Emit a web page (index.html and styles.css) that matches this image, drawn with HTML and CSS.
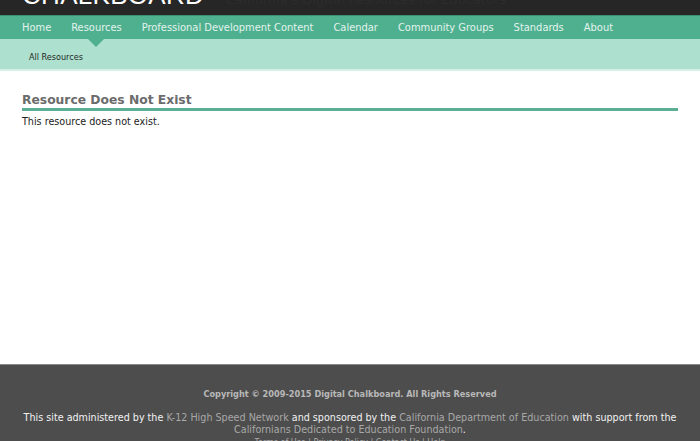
FILE: index.html
```html
<!DOCTYPE html>
<html>
<head>
<meta charset="utf-8">
<link rel="stylesheet" href="styles.css">
</head>
<body>
<header class="top">
  <div class="brand">
    <span class="logo">CHALKBOARD</span>
    <span class="tagline">California's Digital Resources for Educators</span>
  </div>
</header>
<nav class="mainnav">
  <a class="item">Home</a>
  <a class="item active">Resources</a>
  <a class="item">Professional Development Content</a>
  <a class="item">Calendar</a>
  <a class="item">Community Groups</a>
  <a class="item">Standards</a>
  <a class="item">About</a>
</nav>
<div class="subnav">
  <a class="subitem">All Resources</a>
</div>
<main class="content">
  <h1 class="title">Resource Does Not Exist</h1>
  <p class="msg">This resource does not exist.</p>
</main>
<footer class="footer">
  <p class="copy">Copyright © 2009-2015 Digital Chalkboard. All Rights Reserved</p>
  <p class="admin">This site administered by the <a class="flink">K-12 High Speed Network</a> and sponsored by the <a class="flink">California Department of Education</a> with support from the <a class="flink">Californians Dedicated to Education Foundation</a>.</p>
  <p class="small">Terms of Use | Privacy Policy | Contact Us | Help</p>
</footer>
</body>
</html>
```
FILE: styles.css
```css
html, body {
  margin: 0;
  padding: 0;
  background: #fff;
  font-family: "DejaVu Sans", sans-serif;
}
body {
  height: 441px;
  overflow: hidden;
  display: flex;
  flex-direction: column;
}
.top {
  background: #262626;
  height: 15px;
  overflow: hidden;
  flex: none;
}
.brand {
  display: flex;
  align-items: baseline;
  padding-left: 22px;
  margin-top: -17px;
  line-height: 24px;
}
.logo {
  font-family: "Liberation Sans", sans-serif;
  font-size: 26px;
  color: #fff;
  letter-spacing: 0.3px;
}
.tagline {
  margin-left: 22px;
  font-size: 13px;
  color: #2c2c2c;
}
.mainnav {
  flex: none;
  background: #4fb08f;
  height: 24px;
  display: flex;
  align-items: center;
  padding-left: 12px;
  border-top: 1px solid #3f8f74;
  box-sizing: border-box;
}
.item {
  position: relative;
  color: #e3f3ed;
  font-size: 11px;
  font-stretch: semi-condensed;
  padding: 0 10px;
  line-height: 24px;
}
.item.active::after {
  content: "";
  position: absolute;
  left: 50%;
  top: 23px;
  margin-left: -8px;
  border-left: 8px solid transparent;
  border-right: 8px solid transparent;
  border-top: 8px solid #4fb08f;
  z-index: 2;
}
.subnav {
  flex: none;
  background: #ade0cf;
  height: 32px;
  display: flex;
  align-items: center;
  padding-left: 29px;
  padding-top: 6px;
  box-sizing: border-box;
  border-bottom: 2px solid #d6efe7;
}
.subitem {
  font-size: 9px;
  color: #1e2a26;
  font-stretch: semi-condensed;
}
.content {
  flex: 1;
  padding: 22px 22px 0;
}
.title {
  margin: 0;
  font-size: 12.3px;
  font-weight: bold;
  color: #6b6b6b;
  line-height: 14px;
  padding-bottom: 1px;
  border-bottom: 3px solid #5aae93;
}
.msg {
  margin: 5px 0 0;
  font-size: 9.6px;
  color: #222;
}
.footer {
  flex: none;
  height: 77px;
  background: #4d4d4d;
  border-top: 1px solid #8a8a8a;
  text-align: center;
  padding: 22px 10px 0;
  box-sizing: border-box;
}
.copy {
  margin: 0;
  font-size: 8.2px;
  font-weight: bold;
  color: #b8b8b8;
  line-height: 14px;
}
.admin {
  margin: 11px 0 0;
  font-size: 9.6px;
  color: #f2f2f2;
  line-height: 12px;
}
.flink {
  color: #a8a8a8;
}
.small {
  margin: 2px 0 0;
  font-size: 8px;
  color: #aaa;
}
```
